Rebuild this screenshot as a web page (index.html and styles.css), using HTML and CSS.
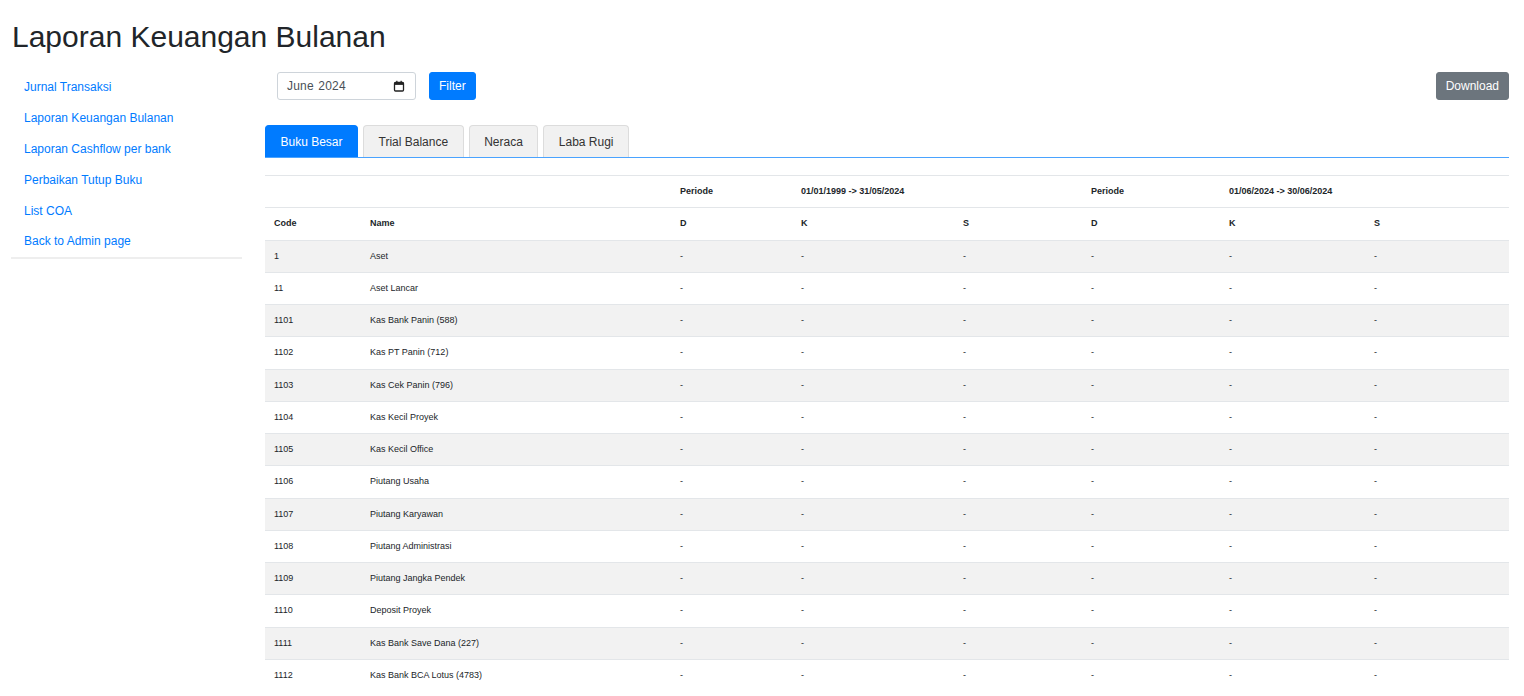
FILE: index.html
```html
<!DOCTYPE html>
<html lang="id">
<head>
<meta charset="utf-8">
<title>Laporan Keuangan Bulanan</title>
<link rel="stylesheet" href="styles.css">
</head>
<body>
<div class="page">
  <h1 class="title">Laporan Keuangan Bulanan</h1>
  <div class="layout">
    <nav class="sidebar">
      <a class="nav-link" href="#">Jurnal Transaksi</a>
      <a class="nav-link" href="#">Laporan Keuangan Bulanan</a>
      <a class="nav-link" href="#">Laporan Cashflow per bank</a>
      <a class="nav-link" href="#">Perbaikan Tutup Buku</a>
      <a class="nav-link" href="#">List COA</a>
      <a class="nav-link" href="#">Back to Admin page</a>
    </nav>
    <main class="main">
      <div class="toolbar">
        <div class="filter-form">
          <div class="date-input">
            <span class="date-text">June 2024</span>
            <svg class="cal-icon" width="12" height="12" viewBox="0 0 12 12" aria-hidden="true">
              <rect x="1.5" y="2.5" width="9" height="8.5" rx="1" fill="none" stroke="#222" stroke-width="1.3"/>
              <rect x="1.5" y="2.5" width="9" height="2.4" fill="#222"/>
              <rect x="3.2" y="0.8" width="1.3" height="2.2" fill="#222"/>
              <rect x="7.5" y="0.8" width="1.3" height="2.2" fill="#222"/>
            </svg>
          </div>
          <button class="btn btn-primary" type="button">Filter</button>
        </div>
        <button class="btn btn-secondary" type="button">Download</button>
      </div>
      <div class="tabs">
        <button class="tab active" type="button">Buku Besar</button>
        <button class="tab" type="button">Trial Balance</button>
        <button class="tab" type="button">Neraca</button>
        <button class="tab" type="button">Laba Rugi</button>
      </div>
      <table class="report">
        <colgroup>
          <col class="c-code"><col class="c-name"><col class="c-d1"><col class="c-k1"><col class="c-s1"><col class="c-d2"><col class="c-k2"><col class="c-s2">
        </colgroup>
        <thead>
          <tr>
            <th></th><th></th><th>Periode</th><th colspan="2">01/01/1999 -&gt; 31/05/2024</th><th>Periode</th><th colspan="2">01/06/2024 -&gt; 30/06/2024</th>
          </tr>
          <tr>
            <th>Code</th><th>Name</th><th>D</th><th>K</th><th>S</th><th>D</th><th>K</th><th>S</th>
          </tr>
        </thead>
        <tbody>
          <tr><td>1</td><td>Aset</td><td>-</td><td>-</td><td>-</td><td>-</td><td>-</td><td>-</td></tr>
          <tr><td>11</td><td>Aset Lancar</td><td>-</td><td>-</td><td>-</td><td>-</td><td>-</td><td>-</td></tr>
          <tr><td>1101</td><td>Kas Bank Panin (588)</td><td>-</td><td>-</td><td>-</td><td>-</td><td>-</td><td>-</td></tr>
          <tr><td>1102</td><td>Kas PT Panin (712)</td><td>-</td><td>-</td><td>-</td><td>-</td><td>-</td><td>-</td></tr>
          <tr><td>1103</td><td>Kas Cek Panin (796)</td><td>-</td><td>-</td><td>-</td><td>-</td><td>-</td><td>-</td></tr>
          <tr><td>1104</td><td>Kas Kecil Proyek</td><td>-</td><td>-</td><td>-</td><td>-</td><td>-</td><td>-</td></tr>
          <tr><td>1105</td><td>Kas Kecil Office</td><td>-</td><td>-</td><td>-</td><td>-</td><td>-</td><td>-</td></tr>
          <tr><td>1106</td><td>Piutang Usaha</td><td>-</td><td>-</td><td>-</td><td>-</td><td>-</td><td>-</td></tr>
          <tr><td>1107</td><td>Piutang Karyawan</td><td>-</td><td>-</td><td>-</td><td>-</td><td>-</td><td>-</td></tr>
          <tr><td>1108</td><td>Piutang Administrasi</td><td>-</td><td>-</td><td>-</td><td>-</td><td>-</td><td>-</td></tr>
          <tr><td>1109</td><td>Piutang Jangka Pendek</td><td>-</td><td>-</td><td>-</td><td>-</td><td>-</td><td>-</td></tr>
          <tr><td>1110</td><td>Deposit Proyek</td><td>-</td><td>-</td><td>-</td><td>-</td><td>-</td><td>-</td></tr>
          <tr><td>1111</td><td>Kas Bank Save Dana (227)</td><td>-</td><td>-</td><td>-</td><td>-</td><td>-</td><td>-</td></tr>
          <tr><td>1112</td><td>Kas Bank BCA Lotus (4783)</td><td>-</td><td>-</td><td>-</td><td>-</td><td>-</td><td>-</td></tr>
        </tbody>
      </table>
    </main>
  </div>
</div>
</body>
</html>
```
FILE: styles.css
```css
* { box-sizing: border-box; }

html, body {
  margin: 0;
  padding: 0;
  background: #fff;
}

body {
  font-family: "Liberation Sans", Arial, Helvetica, sans-serif;
  font-size: 12px;
  line-height: 1.5;
  color: #212529;
}

.page {
  padding: 19px 15px 0 11px;
}

.title {
  margin: 0 0 17px 1px;
  font-size: 30px;
  font-weight: 400;
  line-height: 36px;
  color: #212529;
}

.layout {
  display: flex;
  align-items: flex-start;
}

.sidebar {
  width: 231px;
  flex: none;
  display: flex;
  flex-direction: column;
  border-bottom: 2px solid #eeeeee;
}

.nav-link {
  display: block;
  padding: 6.4px 13px;
  line-height: 18px;
  color: #007bff;
  text-decoration: none;
  font-size: 12px;
}

.main {
  flex: 1;
  min-width: 0;
  margin-left: 23px;
}

.toolbar {
  display: flex;
  justify-content: space-between;
  align-items: center;
  height: 28px;
}

.filter-form {
  display: flex;
  align-items: center;
  gap: 13px;
  margin-left: 12px;
}

.date-input {
  width: 139px;
  height: 28px;
  border: 1px solid #ced4da;
  border-radius: 3px;
  display: flex;
  align-items: center;
  justify-content: space-between;
  padding: 0 10px 0 9px;
  background: #fff;
  color: #495057;
  font-size: 12px;
}

.date-text {
  letter-spacing: 0.2px;
  word-spacing: 1px;
}

.cal-icon { display: block; }

.btn {
  font-family: inherit;
  font-size: 12px;
  line-height: 18px;
  height: 28px;
  padding: 4px 9px;
  border: 1px solid transparent;
  border-radius: 3px;
  color: #fff;
  cursor: pointer;
}

.btn-primary {
  background: #007bff;
  border-color: #007bff;
}

.btn-secondary {
  background: #6c757d;
  border-color: #6c757d;
}

.tabs {
  display: flex;
  gap: 5px;
  margin-top: 25px;
  border-bottom: 1px solid #4aa3ff;
}

.tab {
  font-family: inherit;
  font-size: 12px;
  height: 32px;
  padding: 0 14.5px;
  background: #f1f1f1;
  color: #333;
  border: 1px solid #dcdcdc;
  border-bottom: none;
  border-radius: 4px 4px 0 0;
  cursor: pointer;
}

.tab.active {
  background: #007bff;
  border-color: #007bff;
  color: #fff;
}

.report {
  width: 100%;
  margin-top: 17px;
  border-collapse: separate;
  border-spacing: 0;
  table-layout: fixed;
  font-size: 9px;
  line-height: 13.25px;
  color: #212529;
}

.c-code { width: 96px; }
.c-name { width: 310px; }
.c-d1 { width: 121px; }
.c-k1 { width: 162px; }
.c-s1 { width: 128px; }
.c-d2 { width: 138px; }
.c-k2 { width: 145px; }
.c-s2 { width: auto; }

.report th,
.report td {
  padding: 9px 9px;
  border-top: 1px solid #e3e6e9;
  text-align: left;
  vertical-align: top;
  white-space: nowrap;
}

.report th {
  font-weight: 700;
}

.report td {
  font-weight: 400;
}

.report tbody tr:nth-child(odd) td {
  background: #f2f2f2;
}
```
